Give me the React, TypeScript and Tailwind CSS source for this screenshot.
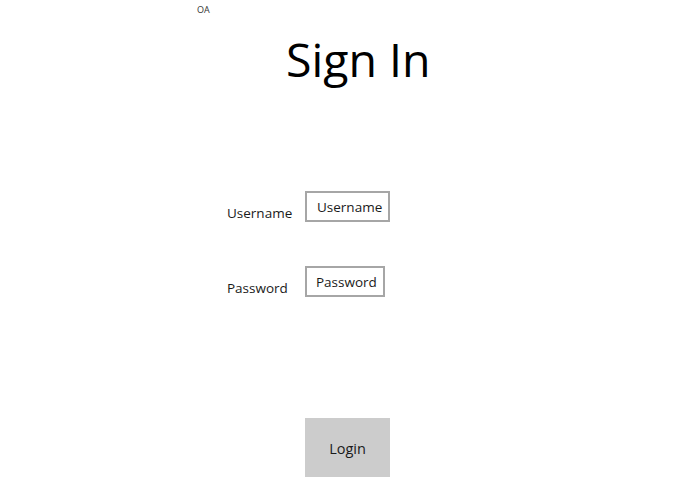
export default function App() {
  return (
    <div className="w-[695px] h-[494px] bg-white text-[#1a1a1a] font-['Open_Sans','Noto_Sans',sans-serif]">
      <div className="pl-[197px] pt-[3px] text-[9px] leading-[14px] text-[#333]">OA</div>
      <h1 className="pl-[286px] mt-[14px] text-[46.5px] leading-[56px] font-normal text-black">Sign In</h1>

      <div className="mt-[104px] grid grid-cols-[78px_auto] gap-y-[44px] pl-[227px] items-start">
        <label className="h-[31px] pt-[13px] text-[13.5px] leading-[18px]">Username</label>
        <div className="flex">
          <input
            placeholder="Username"
            className="w-[85px] h-[31px] border-2 border-[#a6a6a6] pl-[10px] pr-[2px] text-[13.5px] text-[#1a1a1a] placeholder:text-[#1a1a1a] outline-none"
          />
        </div>
        <label className="h-[31px] pt-[13px] text-[13.5px] leading-[18px]">Password</label>
        <div className="flex">
          <input
            type="text"
            placeholder="Password"
            className="w-[80px] h-[31px] border-2 border-[#a6a6a6] pl-[9px] pr-[2px] text-[13.5px] text-[#1a1a1a] placeholder:text-[#1a1a1a] outline-none"
          />
        </div>
      </div>

      <div className="pl-[305px] mt-[121px]">
        <button className="w-[85px] h-[59px] pt-[2px] bg-[#cccccc] text-[14.5px] text-[#1a1a1a]">Login</button>
      </div>
    </div>
  );
}
